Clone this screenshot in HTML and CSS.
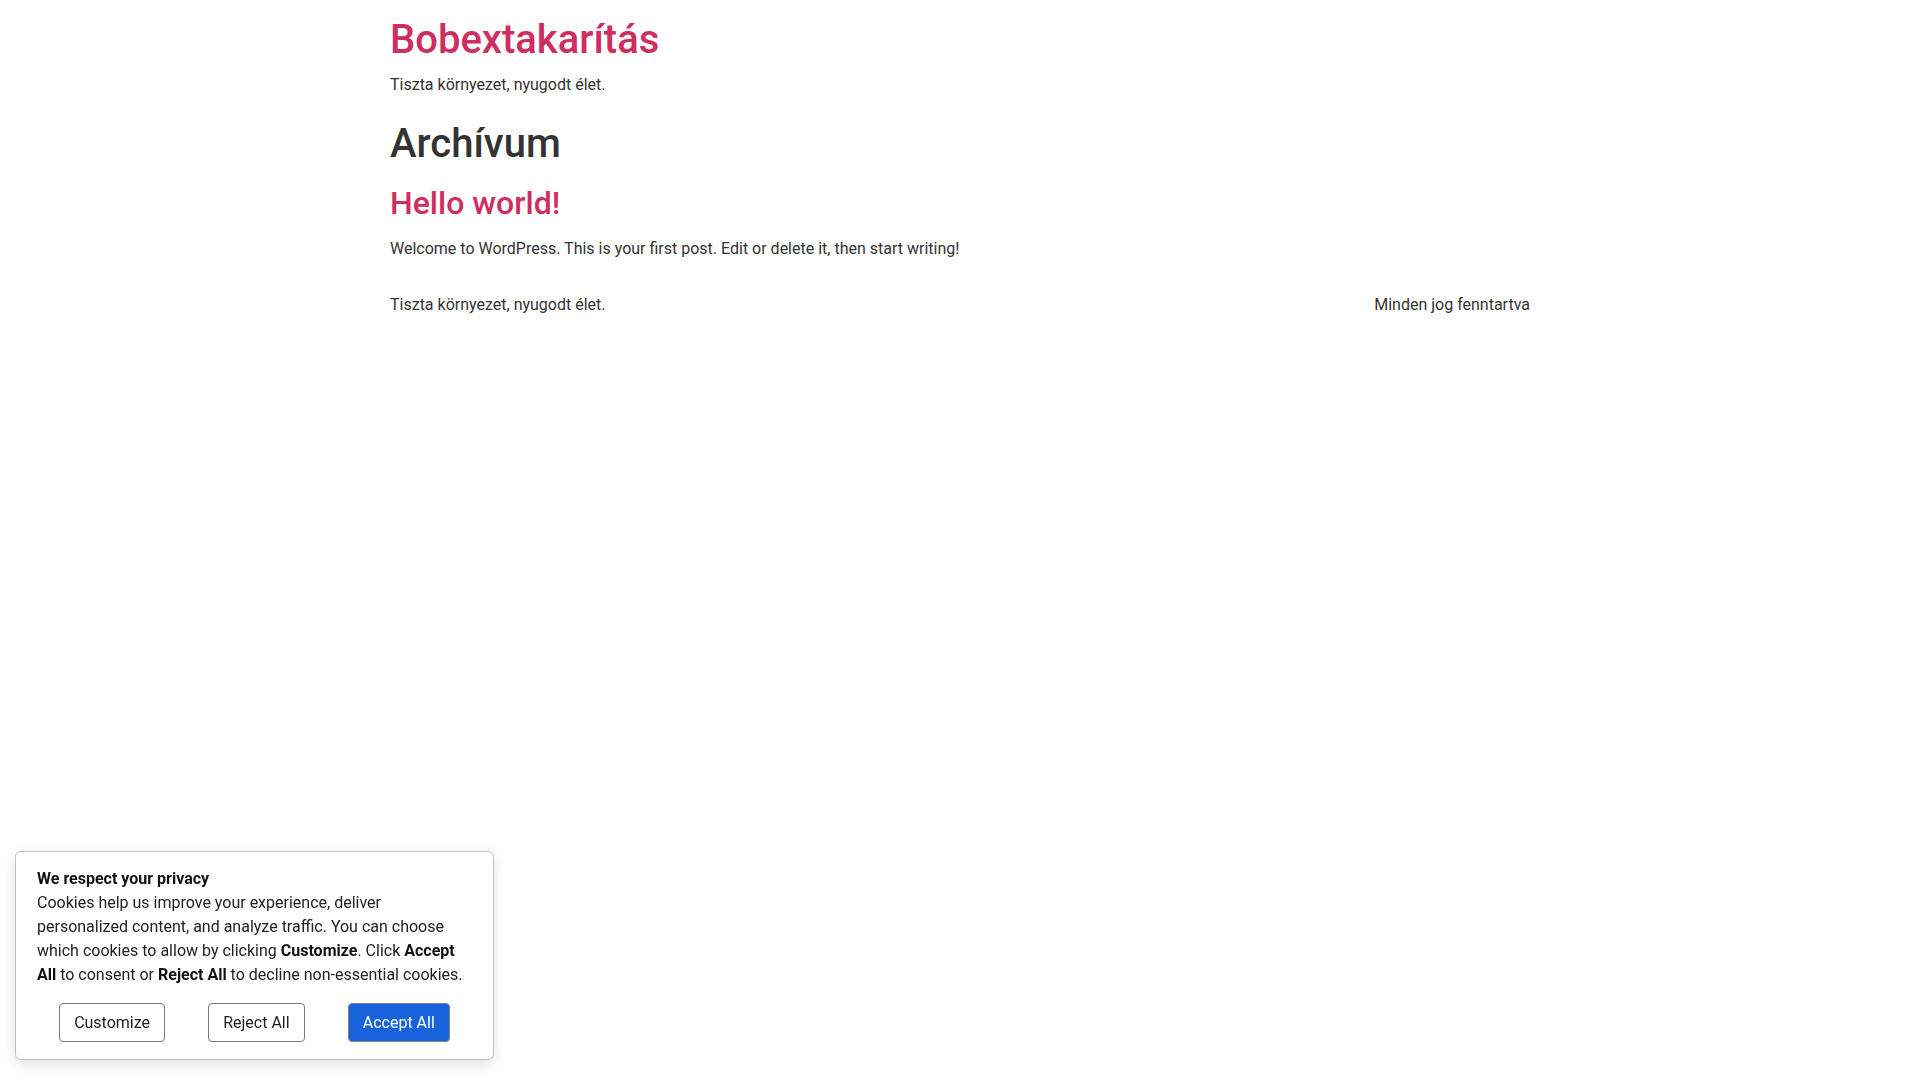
FILE: index.html
```html
<!DOCTYPE html>
<html lang="hu">
<head>
<meta charset="utf-8">
<title>Archívum – Bobextakarítás</title>
<link rel="stylesheet" href="styles.css">
</head>
<body>
<div class="page">
  <header class="site-header">
    <p class="site-title"><a href="#">Bobextakarítás</a></p>
    <p class="site-tagline">Tiszta környezet, nyugodt élet.</p>
  </header>
  <main class="site-main">
    <h1 class="archive-title">Archívum</h1>
    <article class="post">
      <h2 class="post-title"><a href="#">Hello world!</a></h2>
      <p class="post-excerpt">Welcome to WordPress. This is your first post. Edit or delete it, then start writing!</p>
    </article>
  </main>
  <footer class="site-footer">
    <span>Tiszta környezet, nyugodt élet.</span>
    <span>Minden jog fenntartva</span>
  </footer>
</div>

<div class="cookie-banner">
  <div class="cookie-text">
    <p class="cookie-title">We respect your privacy</p>
    <p class="cookie-body">Cookies help us improve your experience, deliver personalized content, and analyze traffic. You can choose which cookies to allow by clicking <b>Customize</b>. Click <b>Accept All</b> to consent or <b>Reject All</b> to decline non-essential cookies.</p>
  </div>
  <div class="cookie-actions">
    <button class="btn">Customize</button>
    <button class="btn">Reject All</button>
    <button class="btn btn-primary">Accept All</button>
  </div>
</div>
</body>
</html>
```

FILE: styles.css
```css
html, body {
  margin: 0;
  padding: 0;
  background: #ffffff;
}

body {
  font-family: Roboto, "Liberation Sans", sans-serif;
  color: #333333;
  font-size: 16px;
  line-height: 24px;
}

a {
  color: #cf2e61;
  text-decoration: none;
}

.page {
  width: 1140px;
  margin: 0 auto;
}

.site-title {
  margin: 16px 0 0;
  font-size: 40px;
  line-height: 48px;
  font-weight: 500;
}

.site-tagline {
  margin: 9px 0 0;
}

.archive-title {
  margin: 23px 0 0;
  font-size: 40px;
  line-height: 48px;
  font-weight: 500;
  color: #333333;
}

.post-title {
  margin: 16px 0 0;
  font-size: 32px;
  line-height: 38.4px;
  font-weight: 500;
}

.post-excerpt {
  margin: 15px 0 0;
}

.site-footer {
  margin-top: 32px;
  display: flex;
  justify-content: space-between;
}

.cookie-banner {
  position: fixed;
  left: 15px;
  bottom: 20px;
  width: 477px;
  box-sizing: content-box;
  background: #ffffff;
  border: 1px solid #b9c1cb;
  border-radius: 6px;
  box-shadow: 0 4px 14px rgba(0, 0, 0, 0.12);
  padding: 17px 0 17px;
  color: #212121;
}

.cookie-text {
  padding: 0 20px 0 21px;
}

.cookie-title {
  margin: 0;
  font-weight: 700;
  line-height: 19px;
  color: #111111;
}

.cookie-body {
  margin: 3px 0 0;
  line-height: 24px;
}

.cookie-body b {
  font-weight: 700;
  color: #111111;
}

.cookie-actions {
  margin-top: 16px;
  display: flex;
  justify-content: space-evenly;
}

.btn {
  font-family: Roboto, "Liberation Sans", sans-serif;
  font-size: 16px;
  line-height: 19px;
  padding: 9px 14px;
  background: #ffffff;
  color: #212121;
  border: 1px solid #7a7a7a;
  border-radius: 4px;
}

.btn-primary {
  background: #1863dc;
  color: #ffffff;
  border-color: #7d8591;
}
```
